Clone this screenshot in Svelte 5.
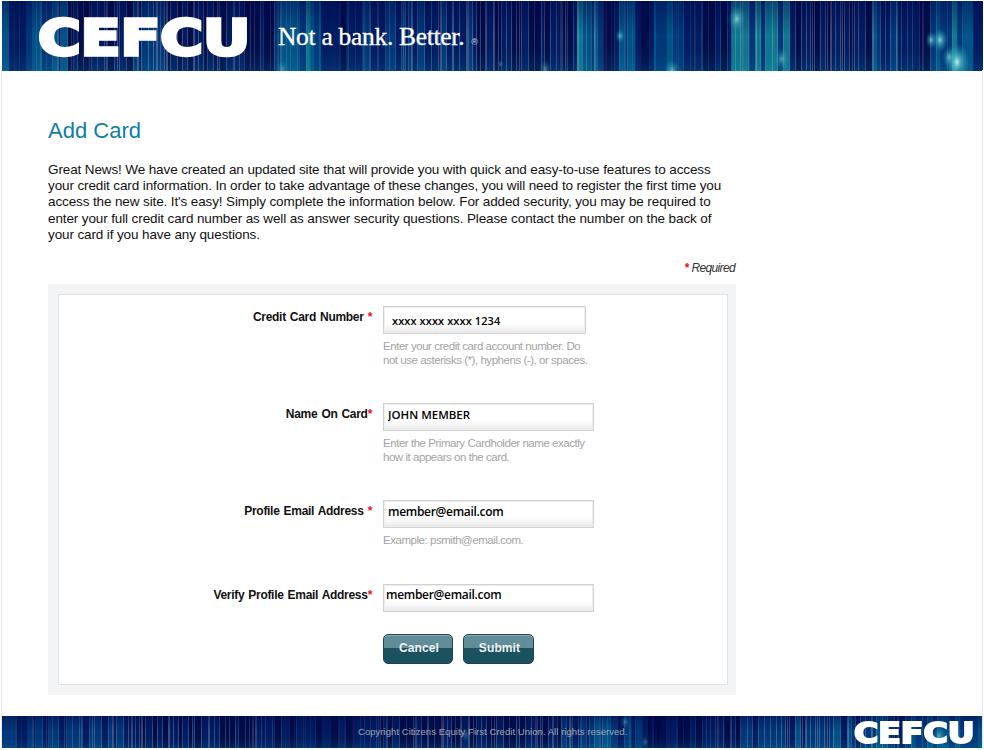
<script>
	// Small seeded generator so the banner stripes stay the same on every load.
	function makeRandom(seed) {
		let s = seed;
		return () => {
			const x = Math.sin(s++) * 10000;
			return x - Math.floor(x);
		};
	}

	const headerZones = [
		[0, 60, 0.5],
		[130, 165, 0.3],
		[270, 320, 0.6],
		[345, 470, 0.3],
		[575, 600, 0.7],
		[615, 635, 0.5],
		[650, 690, 0.5],
		[730, 790, 0.8],
		[870, 900, 0.4],
		[925, 970, 0.65]
	];
	const footerZones = [
		[0, 120, 0.35],
		[560, 640, 0.4],
		[740, 860, 0.4],
		[860, 984, 0.5]
	];

	function brightness(zones, x) {
		for (const [a, b, v] of zones) {
			if (x >= a && x < b) return v;
		}
		return 0.14;
	}

	function buildStripes(seed, zones) {
		const r = makeRandom(seed);
		const out = [];
		let x = 0;
		while (x < 984) {
			const w = 1 + Math.floor(r() * 7);
			const v = brightness(zones, x) * (0.35 + r() * 0.9);
			let fill = '#00074a';
			if (v > 0.62) fill = '#0e7a92';
			else if (v > 0.42) fill = '#06558a';
			else if (v > 0.24) fill = '#03387a';
			else if (v > 0.1) fill = '#011c62';
			out.push({ x, w, fill });
			if (r() < 0.07) out.push({ x: x + w, w: 1, fill: '#4f619c' });
			x += w;
		}
		return out;
	}

	const stripes = buildStripes(7, headerZones);
	const footerStripes = buildStripes(19, footerZones);

	const headerGlows = [
		[737, 18, 9, 0.7],
		[620, 35, 5, 0.55],
		[782, 58, 8, 0.5],
		[672, 70, 8, 0.6],
		[932, 39, 6, 0.7],
		[941, 39, 8, 0.8],
		[958, 61, 13, 0.95],
		[950, 56, 7, 0.55],
		[545, 68, 6, 0.4],
		[281, 68, 6, 0.35],
		[500, 63, 3, 0.3]
	];
	const footerGlows = [
		[465, 735, 5, 0.3],
		[625, 722, 5, 0.35],
		[645, 742, 4, 0.3],
		[940, 736, 7, 0.5]
	].map(([x, y, r, o]) => [x, y - 716, r, o]);

	const introLines = [
		'Great News! We have created an updated site that will provide you with quick and easy-to-use features to access',
		'your credit card information. In order to take advantage of these changes, you will need to register the first time you',
		"access the new site. It's easy! Simply complete the information below. For added security, you may be required to",
		'enter your full credit card number as well as answer security questions. Please contact the number on the back of',
		'your card if you have any questions.'
	];

	const fields = [
		{
			label: 'Credit Card Number',
			mark: ' *',
			value: 'xxxx xxxx xxxx 1234',
			kind: 'card',
			hint: 'Enter your credit card account number. Do not use asterisks (*), hyphens (-), or spaces.'
		},
		{
			label: 'Name On Card',
			mark: '*',
			value: 'JOHN MEMBER',
			kind: 'name',
			hint: 'Enter the Primary Cardholder name exactly how it appears on the card.'
		},
		{
			label: 'Profile Email Address',
			mark: ' *',
			value: 'member@email.com',
			kind: 'email',
			hint: 'Example: psmith@email.com.'
		},
		{
			label: 'Verify Profile Email Address',
			mark: '*',
			value: 'member@email.com',
			kind: 'verify',
			hint: ''
		}
	];
</script>

{#snippet banner(id, list, glows, height)}
	<svg class="stripes" viewBox="0 0 984 {height}" preserveAspectRatio="none" aria-hidden="true">
		<defs>
			<radialGradient id="{id}-glow">
				<stop offset="0" stop-color="#c5f3ee" />
				<stop offset="0.35" stop-color="#55c4c8" stop-opacity="0.7" />
				<stop offset="1" stop-color="#1a8aa8" stop-opacity="0" />
			</radialGradient>
			<linearGradient id="{id}-fade" x1="0" y1="0" x2="0" y2="1">
				<stop offset="0" stop-color="#00074a" stop-opacity="0.45" />
				<stop offset="0.5" stop-color="#00074a" stop-opacity="0" />
				<stop offset="1" stop-color="#1c93a6" stop-opacity="0.18" />
			</linearGradient>
			<filter id="{id}-soft" x="0" y="0" width="1" height="1">
				<feGaussianBlur stdDeviation="0.7 0" />
			</filter>
		</defs>
		<g filter="url(#{id}-soft)">
			{#each list as s}
				<rect x={s.x} y="0" width={s.w} {height} fill={s.fill} />
			{/each}
		</g>
		<rect x="0" y="0" width="984" {height} fill="url(#{id}-fade)" />
		{#each glows as [x, y, r, o]}
			<ellipse cx={x} cy={y} rx={r} ry={r * 1.5} fill="url(#{id}-glow)" opacity={o} />
		{/each}
	</svg>
{/snippet}

<div class="page">
	<header class="top">
		{@render banner('head', stripes, headerGlows, 70)}
		<span class="logo">CEFCU</span>
		<span class="tagline">Not a bank. Better.<small>®</small></span>
	</header>

	<main class="content">
		<h1>Add Card</h1>
		<p class="intro">
			{#each introLines as line}
				<span>{line}</span>
			{/each}
		</p>
		<div class="required"><i class="star">*</i> Required</div>

		<section class="panel">
			<form class="inner">
				{#each fields as f}
					<div class="row">
						<label for={f.kind}>{f.label}<span class="star">{f.mark}</span></label>
						<div class="control">
							<input id={f.kind} class={f.kind} type="text" value={f.value} />
							{#if f.hint}
								<div class="hint">{f.hint}</div>
							{/if}
						</div>
					</div>
				{/each}
				<div class="actions">
					<button type="button" class="btn cancel">Cancel</button>
					<button type="button" class="btn submit">Submit</button>
				</div>
			</form>
		</section>
	</main>

	<footer class="bottom">
		{@render banner('foot', footerStripes, footerGlows, 32)}
		<span class="copy">Copyright Citizens Equity First Credit Union. All rights reserved.</span>
		<span class="logo small">CEFCU</span>
	</footer>
</div>

<style>
	:global(body) {
		margin: 0;
		background: #fff;
	}

	.page {
		width: 984px;
		height: 750px;
		box-sizing: border-box;
		padding: 1px 0 2px;
		display: flex;
		flex-direction: column;
		font-family: 'Liberation Sans', Arial, sans-serif;
		color: #111;
		position: relative;
	}

	.page::before,
	.page::after {
		content: '';
		position: absolute;
		top: 70px;
		bottom: 0;
		width: 1px;
		background: #e6e6e6;
	}
	.page::before {
		left: 1px;
	}
	.page::after {
		left: 982px;
	}

	.top,
	.bottom {
		position: relative;
		margin: 0 1px 0 2px;
		flex: none;
	}
	.top {
		height: 70px;
	}
	.bottom {
		height: 32px;
	}

	.stripes {
		position: absolute;
		inset: 0;
		width: 100%;
		height: 100%;
		display: block;
	}

	.logo {
		position: absolute;
		left: 36px;
		top: 7px;
		font-family: 'DejaVu Sans', sans-serif;
		font-weight: 700;
		font-size: 50px;
		line-height: 60px;
		color: #fff;
		-webkit-text-stroke: 3.4px #fff;
		transform: scaleX(1.165);
		transform-origin: left center;
	}
	.logo.small {
		left: 852px;
		top: 6px;
		font-size: 28px;
		line-height: 24px;
		-webkit-text-stroke: 2px #fff;
		transform: scaleX(1.18);
	}

	.tagline {
		position: absolute;
		left: 276px;
		top: 21px;
		font-family: 'Liberation Serif', serif;
		font-size: 25.5px;
		line-height: 30px;
		letter-spacing: -0.3px;
		color: #fff;
		-webkit-text-stroke: 0.3px #fff;
		white-space: nowrap;
	}
	.tagline small {
		font-family: 'Liberation Sans', sans-serif;
		font-size: 9px;
		margin-left: 7px;
		color: #c8d3dd;
		letter-spacing: 0;
		-webkit-text-stroke: 0;
	}

	.content {
		flex: 1;
		padding: 47px 0 0 48px;
	}

	h1 {
		margin: 0 0 18px;
		font-size: 22px;
		line-height: 26px;
		font-weight: 400;
		color: #0f7ea3;
	}

	.intro {
		margin: 0;
		font-size: 13.5px;
		line-height: 16.2px;
		letter-spacing: -0.12px;
		color: #111;
	}
	.intro span {
		display: block;
		white-space: nowrap;
	}

	.required {
		width: 687px;
		margin-top: 17px;
		height: 17px;
		text-align: right;
		font-size: 12px;
		line-height: 17px;
		font-style: italic;
		letter-spacing: -0.65px;
		color: #333;
	}

	.star {
		color: #e8101c;
		font-style: normal;
		font-weight: 700;
	}

	.panel {
		width: 688px;
		box-sizing: border-box;
		margin-top: 7px;
		padding: 10px 8px 10px 10px;
		background: #f2f4f5;
	}

	.inner {
		border: 1px solid #dfe3e5;
		background: #fff;
		padding: 11px 0 20px;
	}

	.row {
		display: grid;
		grid-template-columns: 314px 1fr;
		column-gap: 10px;
		margin-bottom: 36px;
	}
	.row:nth-last-child(2) {
		margin-bottom: 22px;
	}

	label {
		text-align: right;
		font-size: 12px;
		font-weight: 700;
		line-height: 14px;
		padding: 4px 1px 0 0;
		letter-spacing: -0.3px;
		word-spacing: 1px;
		color: #111;
		white-space: pre;
	}

	.control {
		min-width: 0;
	}

	input {
		display: block;
		box-sizing: border-box;
		height: 28px;
		width: 211px;
		margin: 0;
		border: 1px solid #d0d0d0;
		box-shadow: inset 0 0 0 1px #eeeeee;
		border-radius: 0;
		background: linear-gradient(#fff 0 60%, #f6f6f6 80%, #e6e6e6 100%);
		font-family: 'Open Sans', sans-serif;
		font-weight: 600;
		font-size: 12px;
		color: #000;
	}
	input.card {
		width: 203px;
		padding: 1px 0 0 8px;
		font-size: 11px;
		letter-spacing: 0.1px;
	}
	input.name {
		padding: 0 0 6px 4px;
		font-size: 11.5px;
	}
	input.email {
		padding: 0 0 5px 4px;
		letter-spacing: -0.3px;
	}
	input.verify {
		padding: 0 0 7px 2px;
		letter-spacing: -0.3px;
	}

	.hint {
		margin-top: 6px;
		width: 210px;
		font-size: 11.5px;
		line-height: 13.5px;
		letter-spacing: -0.46px;
		color: #a3a3a3;
	}

	.actions {
		display: flex;
		gap: 10px;
		padding-left: 324px;
	}

	.btn {
		height: 30px;
		box-sizing: border-box;
		padding: 0 0 2px 2px;
		border: 1px solid #20424c;
		border-radius: 5px;
		background: linear-gradient(#628d98 0 48%, #1c5260 48% 100%);
		box-shadow: inset 0 1px 0 #8aa9b1;
		font-family: 'Liberation Sans', sans-serif;
		font-size: 12px;
		font-weight: 700;
		color: #eef3f4;
		letter-spacing: 0.1px;
	}
	.cancel {
		width: 70px;
	}
	.submit {
		width: 71px;
	}

	.copy {
		position: absolute;
		left: 356px;
		top: 10px;
		font-size: 9.5px;
		line-height: 12px;
		letter-spacing: 0.05px;
		color: #9fa4ad;
		white-space: nowrap;
	}
</style>
